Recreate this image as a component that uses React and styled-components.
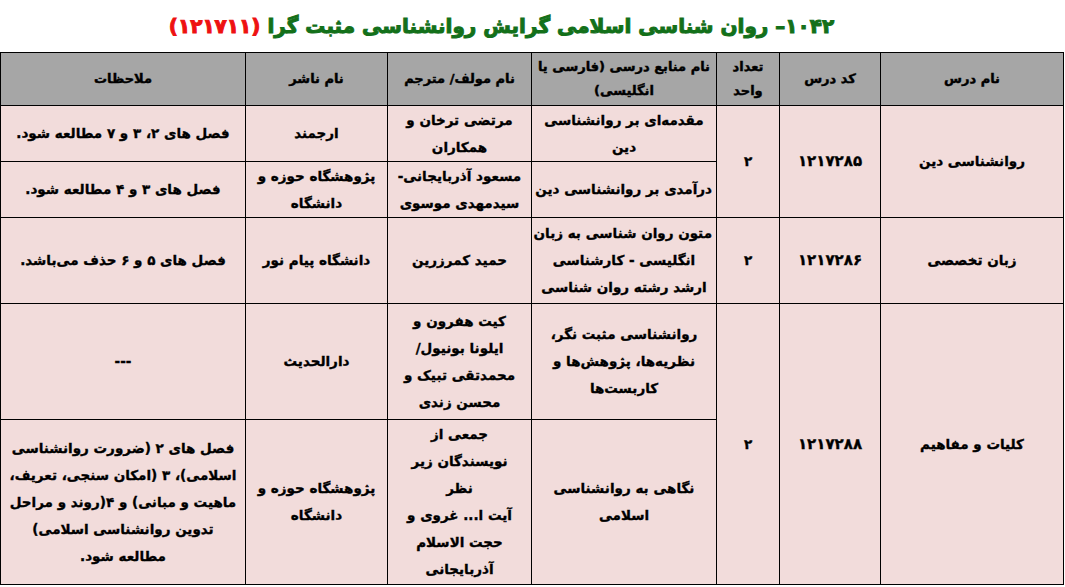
import styled, { createGlobalStyle } from "styled-components";

const GlobalStyle = createGlobalStyle`
  html, body {
    margin: 0;
    padding: 0;
    background: #ffffff;
  }
  body {
    font-family: "DejaVu Sans", "Noto Sans", sans-serif;
  }
`;

const rows = [
  {
    course: "روانشناسی دین",
    code: "۱۲۱۷۲۸۵",
    units: "۲",
    books: [
      {
        title: ["مقدمه‌ای بر روانشناسی", "دین"],
        author: ["مرتضی ترخان و", "همکاران"],
        publisher: ["ارجمند"],
        note: ["فصل های ۲، ۳ و ۷ مطالعه شود."],
        height: 56,
      },
      {
        title: ["درآمدی بر روانشناسی دین"],
        author: ["مسعود آذربایجانی-", "سیدمهدی موسوی"],
        publisher: ["پژوهشگاه حوزه و", "دانشگاه"],
        note: ["فصل های ۳ و ۴ مطالعه شود."],
        height: 56,
      },
    ],
  },
  {
    course: "زبان تخصصی",
    code: "۱۲۱۷۲۸۶",
    units: "۲",
    books: [
      {
        title: ["متون روان شناسی به زبان", "انگلیسی - کارشناسی", "ارشد رشته روان شناسی"],
        author: ["حمید کمرزرین"],
        publisher: ["دانشگاه پیام نور"],
        note: ["فصل های ۵ و ۶ حذف می‌باشد."],
        height: 86,
      },
    ],
  },
  {
    course: "کلیات و مفاهیم",
    code: "۱۲۱۷۲۸۸",
    units: "۲",
    books: [
      {
        title: ["روانشناسی مثبت نگر،", "نظریه‌ها، پژوهش‌ها و", "کاربست‌ها"],
        author: ["کیت هفرون و", "ایلونا بونیول/", "محمدتقی تبیک و", "محسن زندی"],
        publisher: ["دارالحدیث"],
        note: ["---"],
        height: 116,
      },
      {
        title: ["نگاهی به روانشناسی", "اسلامی"],
        author: ["جمعی از", "نویسندگان زیر", "نظر", "آیت ا... غروی و", "حجت الاسلام", "آذربایجانی"],
        publisher: ["پژوهشگاه حوزه و", "دانشگاه"],
        note: [
          "فصل های ۲ (ضرورت روانشناسی",
          "اسلامی)، ۳ (امکان سنجی، تعریف،",
          "ماهیت و مبانی) و ۴(روند و مراحل",
          "تدوین روانشناسی اسلامی)",
          "مطالعه شود.",
        ],
        height: 165,
      },
    ],
  },
];

const Lines = ({ items }) =>
  items.map((line, i) => (
    <span key={i}>
      {line}
      {i < items.length - 1 && <br />}
    </span>
  ));

const App = () => {
  return (
    <Page dir="rtl">
      <GlobalStyle />
      <Title>
        ۱۰۴۲– روان شناسی اسلامی گرایش روانشناسی مثبت گرا <Code>(۱۲۱۷۱۱)</Code>
      </Title>
      <Table>
        <colgroup>
          <col style={{ width: 183 }} />
          <col style={{ width: 101 }} />
          <col style={{ width: 63 }} />
          <col style={{ width: 185 }} />
          <col style={{ width: 144 }} />
          <col style={{ width: 142 }} />
          <col style={{ width: 245 }} />
        </colgroup>
        <thead>
          <tr>
            <Th>نام درس</Th>
            <Th>کد درس</Th>
            <Th>
              تعداد
              <br />
              واحد
            </Th>
            <Th>
              نام منابع درسی (فارسی یا
              <br />
              انگلیسی)
            </Th>
            <Th>نام مولف/ مترجم</Th>
            <Th>نام ناشر</Th>
            <Th>ملاحظات</Th>
          </tr>
        </thead>
        <tbody>
          {rows.map((row) =>
            row.books.map((book, i) => (
              <Row key={row.code + i} $h={book.height}>
                {i === 0 && (
                  <>
                    <Td rowSpan={row.books.length}>{row.course}</Td>
                    <Td rowSpan={row.books.length}>
                      <Num>{row.code}</Num>
                    </Td>
                    <Td rowSpan={row.books.length}>{row.units}</Td>
                  </>
                )}
                <Td>
                  <Lines items={book.title} />
                </Td>
                <Td>
                  <Lines items={book.author} />
                </Td>
                <Td>
                  <Lines items={book.publisher} />
                </Td>
                <Td>
                  <Lines items={book.note} />
                </Td>
              </Row>
            ))
          )}
        </tbody>
      </Table>
    </Page>
  );
};

export default App;

const Page = styled.div`
  width: 1065px;
  height: 587px;
  display: flex;
  flex-direction: column;
  overflow: hidden;
`;

const Title = styled.h1`
  margin: 0;
  height: 52px;
  display: flex;
  align-items: center;
  justify-content: center;
  gap: 7px;
  padding-right: 62px;
  box-sizing: border-box;
  font-size: 20px;
  font-weight: 700;
  -webkit-text-stroke: 1px currentColor;
  color: #13701a;
  white-space: nowrap;
`;

const Code = styled.span`
  color: #ee1111;
`;

const Table = styled.table`
  width: 1063px;
  table-layout: fixed;
  border-collapse: collapse;
  border: 1.5px solid #000;
  margin-right: 1px;
`;

const Th = styled.th`
  height: 52px;
  background: #a6a6a6;
  border: 1px solid #000;
  font-size: 13px;
  font-weight: 700;
  -webkit-text-stroke: 0.45px #000;
  line-height: 24px;
  color: #000;
  padding: 0 4px;
  text-align: center;
  vertical-align: middle;
  white-space: nowrap;
`;

const Row = styled.tr`
  height: ${(p) => p.$h}px;
`;

const Td = styled.td`
  background: #f2dcdb;
  border: 1px solid #000;
  font-size: 13.5px;
  font-weight: 700;
  -webkit-text-stroke: 0.35px #000;
  line-height: 27px;
  color: #000;
  padding: 0 4px;
  text-align: center;
  vertical-align: middle;
  white-space: nowrap;
`;

const Num = styled.span`
  letter-spacing: 1px;
  font-size: 15px;
`;
